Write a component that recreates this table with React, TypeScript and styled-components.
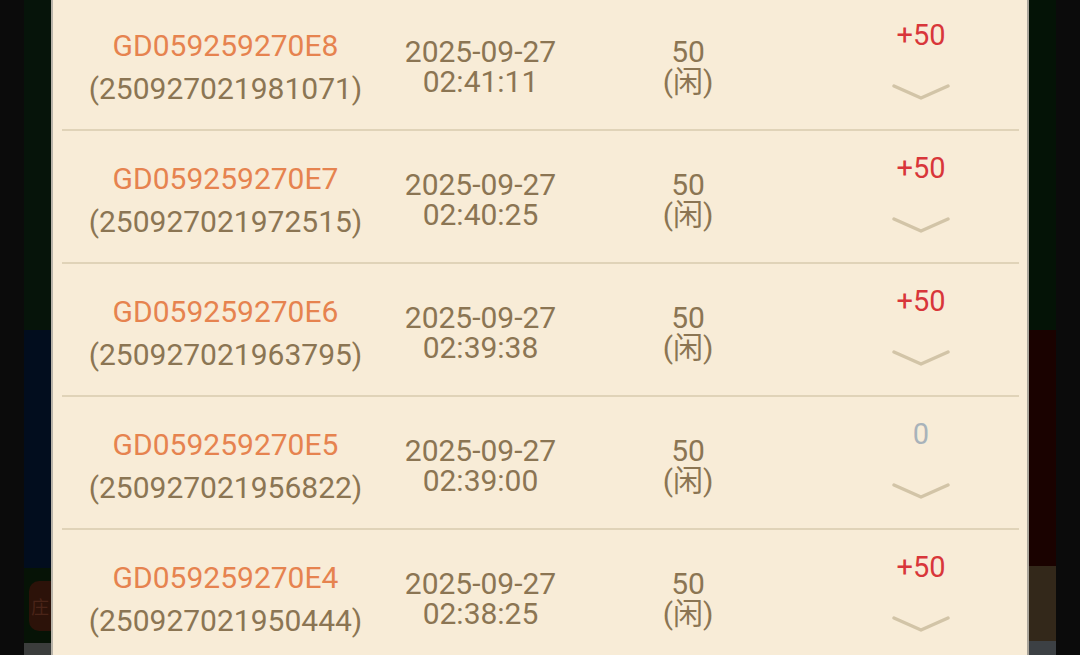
import styled, { createGlobalStyle } from "styled-components"

const GlobalStyle = createGlobalStyle`
  html, body {
    margin: 0;
    padding: 0;
    background: #0c0c0c;
  }
  body {
    font-family: Roboto, "Noto Sans", "Noto Sans CJK SC", sans-serif;
  }
`

type Record = {
  order: string
  serial: string
  date: string
  time: string
  amount: string
  side: string
  result: string
}

const records: Record[] = [
  { order: "GD059259270E8", serial: "250927021981071", date: "2025-09-27", time: "02:41:11", amount: "50", side: "闲", result: "+50" },
  { order: "GD059259270E7", serial: "250927021972515", date: "2025-09-27", time: "02:40:25", amount: "50", side: "闲", result: "+50" },
  { order: "GD059259270E6", serial: "250927021963795", date: "2025-09-27", time: "02:39:38", amount: "50", side: "闲", result: "+50" },
  { order: "GD059259270E5", serial: "250927021956822", date: "2025-09-27", time: "02:39:00", amount: "50", side: "闲", result: "0" },
  { order: "GD059259270E4", serial: "250927021950444", date: "2025-09-27", time: "02:38:25", amount: "50", side: "闲", result: "+50" },
]

const leftBackdrop = [
  { color: "#06140a", size: 330 },
  { color: "#020d1e", size: 238 },
  { color: "#061306", size: 75, badge: true },
  { color: "#3b3d3c", size: 12 },
]

const rightBackdrop = [
  { color: "#041306", size: 330 },
  { color: "#1a0200", size: 236 },
  { color: "#33281a", size: 75 },
  { color: "#3c4044", size: 14 },
]

export default function App() {
  return (
    <>
      <GlobalStyle />
      <Screen>
        <Gutter />
        <Backdrop>
          {leftBackdrop.map((s, i) => (
            <BackdropBlock key={i} $color={s.color} $size={s.size}>
              {s.badge && <Badge>庄</Badge>}
            </BackdropBlock>
          ))}
        </Backdrop>

        <Sheet>
          <List>
            {records.map((r) => (
              <Row key={r.order}>
                <OrderCell>
                  <OrderNo>{r.order}</OrderNo>
                  <Serial>({r.serial})</Serial>
                </OrderCell>
                <StackCell>
                  <span>{r.date}</span>
                  <span>{r.time}</span>
                </StackCell>
                <StackCell>
                  <span>{r.amount}</span>
                  <span>({r.side})</span>
                </StackCell>
                <ResultCell>
                  <Result $zero={r.result === "0"}>{r.result}</Result>
                  <Chevron viewBox="0 0 60 18" width="60" height="18">
                    <polyline points="3,3 30,15 57,3" />
                  </Chevron>
                </ResultCell>
              </Row>
            ))}
          </List>
        </Sheet>

        <Backdrop>
          {rightBackdrop.map((s, i) => (
            <BackdropBlock key={i} $color={s.color} $size={s.size} />
          ))}
        </Backdrop>
        <Gutter />
      </Screen>
    </>
  )
}

const Screen = styled.div`
  display: flex;
  width: 1080px;
  height: 655px;
  overflow: hidden;
  background: #0c0c0c;
`

const Gutter = styled.div`
  flex: 0 0 24px;
  background: #0b0b0b;
`

const Backdrop = styled.div`
  flex: 0 0 27px;
  display: flex;
  flex-direction: column;
`

const BackdropBlock = styled.div<{ $color: string; $size: number }>`
  flex: 0 0 ${(p) => p.$size}px;
  background: ${(p) => p.$color};
  display: flex;
  align-items: center;
  justify-content: flex-end;
`

const Badge = styled.div`
  width: 22px;
  height: 50px;
  border-radius: 10px 0 0 10px;
  background: #2c1209;
  color: #4a2418;
  font-size: 18px;
  line-height: 50px;
  text-align: center;
  font-family: "Noto Sans CJK SC", sans-serif;
`

const Sheet = styled.div`
  flex: 1;
  background: #f8ecd7;
  border-left: 2px solid #b9b4aa;
  border-right: 2px solid #aaa59b;
  padding: 0 8px 0 9px;
  overflow: hidden;
`

const List = styled.div`
  margin-top: -2px;
`

const Row = styled.div`
  display: grid;
  grid-template-columns: 327px 183px 232px 1fr;
  align-items: center;
  height: 133px;
  padding-top: 7px;
  box-sizing: border-box;
  border-bottom: 2px solid #e0d3b8;
`

const OrderCell = styled.div`
  display: flex;
  flex-direction: column;
  align-items: center;
  font-size: 30px;
  line-height: 43px;
`

const OrderNo = styled.span`
  color: #e6834f;
`

const Serial = styled.span`
  color: #8b7553;
`

const StackCell = styled.div`
  display: flex;
  flex-direction: column;
  align-items: center;
  font-size: 30px;
  line-height: 30px;
  color: #8b7553;
  font-family: Roboto, "Noto Sans CJK SC", sans-serif;
`

const ResultCell = styled.div`
  align-self: start;
  display: flex;
  flex-direction: column;
  align-items: center;
  padding: 15px 0 0 19px;
`

const Result = styled.span<{ $zero: boolean }>`
  font-size: 29px;
  line-height: 30px;
  color: ${(p) => (p.$zero ? "#a9b3ba" : "#d8363a")};
`

const Chevron = styled.svg`
  margin-top: 33px;
  fill: none;
  stroke: #d2c4a7;
  stroke-width: 3.4;
  stroke-linecap: round;
  stroke-linejoin: round;
  filter: blur(0.6px);
`
